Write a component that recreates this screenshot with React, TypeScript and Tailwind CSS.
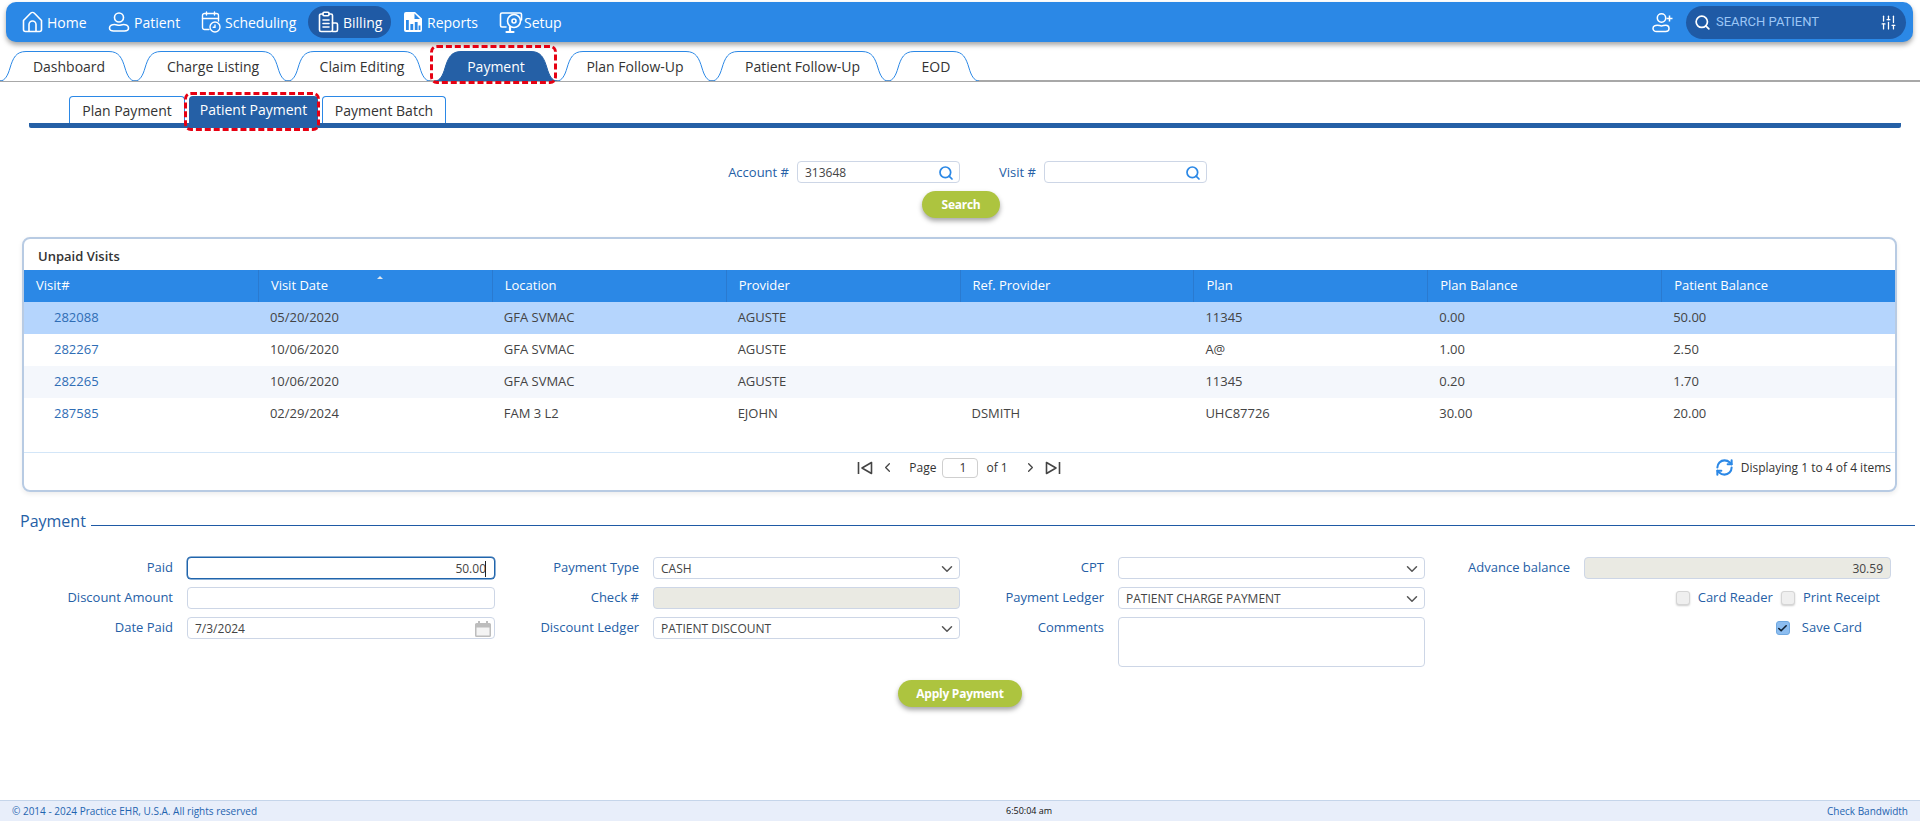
import type { ReactNode } from "react"
import { ChevronDown, ChevronLeft, ChevronRight, RefreshCw, Search, SlidersVertical, Check } from "lucide-react"

const font = "font-['Open_Sans',sans-serif]"

function HomeIcon() {
  return (
    <svg width="21" height="22" viewBox="0 0 21 22" fill="none" stroke="currentColor" strokeWidth="1.6" strokeLinejoin="round">
      <path d="M1.5 9.5 8.6 2.2c1-1 2.8-1 3.8 0l7.1 7.3v9a2 2 0 0 1-2 2h-14a2 2 0 0 1-2-2z" />
      <path d="M7 20.500v-7a3.500 3.500 0 0 1 7 0v7" />
    </svg>
  )
}

function PatientIcon() {
  return (
    <svg width="22" height="20" viewBox="0 0 22 20" fill="none" stroke="currentColor" strokeWidth="1.6">
      <circle cx="11" cy="5.500" r="4.500" />
      <path d="M1.500 16c0-2.500 3-3.500 5-3.500 2 0 3 .8 4.500.8s2.500-.8 4.500-.8c2 0 5 1 5 3.500 0 2.200-2 3-4 3h-11c-2 0-4-.8-4-3z" />
    </svg>
  )
}

function AddPatientIcon() {
  return (
    <svg width="21" height="21" viewBox="0 0 21 21" fill="none" stroke="currentColor" strokeWidth="1.5">
      <circle cx="9.500" cy="6" r="4.200" />
      <path d="M1 16.500c0-2.300 2.500-3.300 4.200-3.300 1.800 0 2.800.7 4.300.7s2.500-.7 4.300-.7c1.700 0 3.200 1 3.200 3.300 0 2-1.700 3-3.400 3H4.400C2.700 19.500 1 18.500 1 16.500z" />
      <path d="M17.500 3.500v6M14.500 6.500h6" />
    </svg>
  )
}

function ScheduleIcon() {
  return (
    <svg width="20" height="22" viewBox="0 0 20 22" fill="none" stroke="currentColor" strokeWidth="1.4" strokeLinecap="round">
      <path d="M8 18.500H3.500a2 2 0 0 1-2-2v-12a2 2 0 0 1 2-2h12a2 2 0 0 1 2 2V10" />
      <path d="M1.500 7.500h16M5.500 1v3M13.500 1v3" />
      <circle cx="14" cy="16" r="5" />
      <path d="M14 14v2.200h-1.800" />
    </svg>
  )
}

function BillingIcon() {
  return (
    <svg width="21" height="22" viewBox="0 0 21 22" fill="none" stroke="currentColor" strokeWidth="1.6" strokeLinecap="round">
      <path d="M5 3H3a1.500 1.500 0 0 0-1.500 1.500V19A1.500 1.500 0 0 0 3 20.500h10a1.500 1.500 0 0 0 1.500-1.500V4.500A1.500 1.500 0 0 0 13 3h-2" />
      <rect x="5" y="1.200" width="6" height="3.500" rx="1" />
      <path d="M5 9h6M5 12.500h6M5 16h6M14.500 12H18a1.500 1.500 0 0 1 1.500 1.500V19a1.500 1.500 0 0 1-1.500 1.500h-3.500" />
    </svg>
  )
}

function ReportsIcon() {
  return (
    <svg width="20" height="22" viewBox="0 0 20 22">
      <path fill="currentColor" d="M3 1h9l7 6.500V19a2 2 0 0 1-2 2H3a2 2 0 0 1-2-2V3a2 2 0 0 1 2-2z" />
      <path fill="#2b88e6" d="M3 9h2.800v10H3zM7.400 13h2.800v6H7.400zM11.800 11h2.800v8h-2.800zM15.600 14.500h1.800V19h-1.800z" />
      <path fill="#2b88e6" d="M11.500 2.500V8H17z" />
    </svg>
  )
}

function SetupIcon() {
  return (
    <svg width="25" height="23" viewBox="0 0 25 23" fill="none" stroke="currentColor" strokeWidth="1.6" strokeLinecap="round">
      <path d="M7 16H3a1.500 1.500 0 0 1-1.500-1.500v-11A1.500 1.500 0 0 1 3 2h18a1.500 1.500 0 0 1 1.500 1.500V9" />
      <circle cx="15" cy="10" r="6.500" />
      <circle cx="15" cy="10" r="2" />
      <path d="M11 16v4M7.500 21h7" strokeWidth="2.200" />
    </svg>
  )
}

function CalendarIcon() {
  return (
    <svg width="16" height="16" viewBox="0 0 16 16">
      <path fill="#bdbdbd" d="M3 0h2v2h6V0h2v2h1.500A1.500 1.500 0 0 1 16 3.500v11a1.500 1.500 0 0 1-1.500 1.500h-13A1.500 1.500 0 0 1 0 14.500v-11A1.500 1.500 0 0 1 1.500 2H3z" />
      <rect x="1.500" y="6.500" width="13" height="8" fill="#f4f4f4" />
    </svg>
  )
}

const navItems = [
  { label: "Home", icon: <HomeIcon />, cls: "w-[86px] gap-[4px]" },
  { label: "Patient", icon: <PatientIcon />, cls: "w-[93px] gap-[4px]" },
  { label: "Scheduling", icon: <ScheduleIcon />, cls: "w-[107px] gap-[4px]" },
  { label: "Billing", icon: <BillingIcon />, cls: "w-[83px] gap-[4px] mr-[12px] rounded-full bg-[#1f5aa5] pl-[10px]" },
  { label: "Reports", icon: <ReportsIcon />, cls: "w-[96px] gap-[4px]" },
  { label: "Setup", icon: <SetupIcon />, cls: "w-[80px] gap-0" },
]

function TabShape({ width, active }: { width: number; active?: boolean }) {
  const w = width
  const d = `M0 30C5 30 8 24 10 17C13 7 16 .5 26 .5H${w - 26}C${w - 16} .5 ${w - 13} 7 ${w - 10} 17C${w - 8} 24 ${w - 5} 30 ${w} 30`
  return (
    <svg className="absolute inset-0" width={w} height="30" viewBox={`0 0 ${w} 30`}>
      <path d={d} fill={active ? "#2560a6" : "#fff"} stroke={active ? "#2560a6" : "#2b88e6"} />
    </svg>
  )
}

const mainTabs = [
  { label: "Dashboard", width: 135, pad: "pl-[3px]" },
  { label: "Charge Listing", width: 153, pad: "pl-[3px]" },
  { label: "Claim Editing", width: 142, pad: "pl-[6px]" },
  { label: "Payment", width: 122, pad: "text-white", active: true },
  { label: "Plan Follow-Up", width: 155, pad: "pl-[1px]" },
  { label: "Patient Follow-Up", width: 176, pad: "pl-[5px]" },
  { label: "EOD", width: 91, pad: "pl-[5px]" },
]

const subTabClass = "h-[27px] rounded-t-[4px] flex items-center justify-center text-[14px]"

const rows = [
  ["282088", "05/20/2020", "GFA SVMAC", "AGUSTE", "", "11345", "0.00", "50.00"],
  ["282267", "10/06/2020", "GFA SVMAC", "AGUSTE", "", "A@", "1.00", "2.50"],
  ["282265", "10/06/2020", "GFA SVMAC", "AGUSTE", "", "11345", "0.20", "1.70"],
  ["287585", "02/29/2024", "FAM 3 L2", "EJOHN", "DSMITH", "UHC87726", "30.00", "20.00"],
]

const headers = ["Visit#", "Visit Date", "Location", "Provider", "Ref. Provider", "Plan", "Plan Balance", "Patient Balance"]

const fieldClass = "h-[22px] w-full rounded-[4px] border flex items-center px-[7px] pt-px text-[12px] text-[#444]"
const inputClass = `${fieldClass} border-[#cdd6e6] bg-white`
const disabledClass = `${fieldClass} border-[#cdd6e6] bg-[#eaeae3]`
const checkClass = "h-[14px] w-[14px] rounded-[3px] border border-[#d5d5d5] bg-[#efefef] shadow-[0_1px_2px_rgba(0,0,0,0.2)]"

function Label({ children }: { children: ReactNode }) {
  return <div className="h-[22px] pr-[14px] text-right text-[13px] leading-[20px] text-[#2560a6]">{children}</div>
}

function SelectBox({ value }: { value?: string }) {
  return (
    <div className={`${inputClass} justify-between`}>
      <span>{value}</span>
      <ChevronDown className="h-[18px] w-[18px] -mr-[4px] text-[#555]" strokeWidth={2} />
    </div>
  )
}

function GreenButton({ children, className }: { children: ReactNode; className: string }) {
  return (
    <button className={`${className} rounded-full bg-[#adc43f] text-white font-bold text-[12px] tracking-[-0.25px] shadow-[0_3px_5px_rgba(0,0,0,0.35)]`}>
      {children}
    </button>
  )
}

export default function App() {
  return (
    <div className={`${font} relative h-[821px] w-[1920px] overflow-hidden bg-white flex flex-col`}>
      {/* top nav */}
      <div className="mt-[2px] ml-[6px] h-[40px] w-[1907px] shrink-0 rounded-[10px] bg-[#2b88e6] shadow-[0_3px_5px_rgba(0,0,0,0.35)] flex items-center pl-[16px] pr-[7px] text-white">
        {navItems.map((item) => (
          <div key={item.label} className={`${item.cls} h-[32px] flex items-center text-[14px]`}>
            {item.icon}
            <span>{item.label}</span>
          </div>
        ))}
        <div className="ml-auto">
          <AddPatientIcon />
        </div>
        <div className="ml-[13px] h-[33px] w-[220px] rounded-full bg-[#1f5aa5] flex items-center pl-[8px] pr-[9px]">
          <Search className="h-[17px] w-[17px]" strokeWidth={2.4} />
          <span className="ml-[5px] text-[13px] text-[#9cc6f5] font-['Roboto',sans-serif]">SEARCH PATIENT</span>
          <SlidersVertical className="ml-auto h-[17px] w-[17px]" strokeWidth={1.8} />
        </div>
      </div>

      {/* main tabs */}
      <div className="mt-[9px] h-[31px] shrink-0 border-b-2 border-[#a8a8a8] flex text-[14px] text-[#333]">
        {mainTabs.map((tab) => (
          <div
            key={tab.label}
            style={{ width: tab.width }}
            className={`relative h-[30px] ${tab.active ? "ml-[5px]" : ""}`}
          >
            <TabShape width={tab.width} active={tab.active} />
            <div className={`relative h-full flex items-center justify-center ${tab.pad}`}>{tab.label}</div>
            {tab.active && <div className="absolute -top-[6px] -left-[5px] right-0 -bottom-[3px] rounded-[7px] border-[3px] border-dashed border-[#e60012]" />}
          </div>
        ))}
      </div>

      {/* sub tabs */}
      <div className="mt-[14px] mx-[29px] w-[1872px] border-b-[5px] border-[#2560a6] rounded-b-[2px] flex items-end pl-[40px] text-[#333]">
        <div className={`${subTabClass} w-[116px] border border-b-0 border-[#2b88e6]`}>Plan Payment</div>
        <div className={`${subTabClass} relative ml-[4px] w-[129px] bg-[#2560a6] text-white`}>
          Patient Payment
          <div className="absolute -top-[4px] -left-[5px] -right-[2px] -bottom-[8px] rounded-[7px] border-[3px] border-dashed border-[#e60012]" />
        </div>
        <div className={`${subTabClass} ml-[4px] w-[124px] border border-b-0 border-[#2b88e6]`}>Payment Batch</div>
      </div>

      {/* search */}
      <div className="mt-[33px] h-[22px] flex items-center text-[13px] text-[#2560a6] whitespace-nowrap">
        <span className="ml-[728px] w-[69px] pr-[8px] text-right leading-[20px]">Account #</span>
        <div className={`${inputClass} !w-[163px] justify-between`}>
          <span>313648</span>
          <Search className="h-[16px] w-[16px] -mr-[2px] text-[#2b88e6]" strokeWidth={2.6} />
        </div>
        <span className="ml-[32px] w-[52px] pr-[8px] text-right leading-[20px]">Visit #</span>
        <div className={`${inputClass} !w-[163px] justify-end`}>
          <Search className="h-[16px] w-[16px] -mr-[2px] text-[#2b88e6]" strokeWidth={2.6} />
        </div>
      </div>
      <GreenButton className="mt-[8px] ml-[922px] h-[27px] w-[78px]">Search</GreenButton>

      {/* unpaid visits grid */}
      <div className="mt-[19px] ml-[22px] h-[255px] w-[1875px] rounded-[8px] border-2 border-[#b8cbe3] shadow-[0_2px_5px_rgba(0,0,0,0.08)] flex flex-col">
        <div className="h-[31px] pl-[14px] pt-[5px] flex items-center text-[13px] font-semibold text-[#333]">Unpaid Visits</div>
        <div className="h-[32px] grid grid-cols-8 bg-[#2b88e6] text-[13px] text-white">
          {headers.map((h, i) => (
            <div key={h} className={`relative flex items-center pl-[12px] ${i > 0 ? "border-l border-[#2a7ad0]" : ""}`}>
              {h}
              {i === 1 && <span className="absolute left-[118px] top-[6px] h-0 w-0 border-x-[3px] border-b-[3px] border-x-transparent border-b-[#dfe6ee]" />}
            </div>
          ))}
        </div>
        {rows.map((row, r) => (
          <div key={row[0]} className={`h-[32px] grid grid-cols-8 text-[13px] text-[#444] ${r === 0 ? "bg-[#b5d5fd]" : r === 2 ? "bg-[#f4f7fc]" : "bg-white"}`}>
            {row.map((cell, c) => (
              <div key={c} className={`flex items-center ${c === 0 ? "pl-[30px] text-[#2f6db5]" : "pl-[12px]"}`}>{cell}</div>
            ))}
          </div>
        ))}
        <div className="mt-[22px] flex-1 border-t border-[#d3e6f8] pb-[8px] relative flex items-center justify-center text-[12px] text-[#333]">
          <div className="flex items-center ml-[-1px]">
            <svg width="16" height="14" viewBox="0 0 16 14" fill="none" stroke="#444" strokeWidth="1.6" strokeLinejoin="round">
              <path d="M1.500 1v12M14.500 1.500v11L5 7z" />
            </svg>
            <ChevronLeft className="ml-[7px] h-[15px] w-[15px] text-[#444]" strokeWidth={2} />
            <span className="ml-[14px]">Page</span>
            <span className="ml-[6px] h-[20px] w-[36px] rounded-[4px] border border-[#cfcfcf] flex items-center justify-end pr-[11px]">1</span>
            <span className="ml-[8px]">of 1</span>
            <ChevronRight className="ml-[15px] h-[15px] w-[15px] text-[#444]" strokeWidth={2} />
            <svg className="ml-[7px]" width="16" height="14" viewBox="0 0 16 14" fill="none" stroke="#444" strokeWidth="1.6" strokeLinejoin="round">
              <path d="M14.500 1v12M1.500 1.500v11L11 7z" />
            </svg>
          </div>
          <div className="absolute right-[4px] top-0 h-full pb-[8px] flex items-center gap-[7px]">
            <RefreshCw className="h-[19px] w-[19px] text-[#2b88e6]" strokeWidth={2.6} />
            <span>Displaying 1 to 4 of 4 items</span>
          </div>
        </div>
      </div>

      {/* payment form */}
      <div className="mt-[18px] ml-[20px] mr-[5px] flex items-end gap-[5px]">
        <span className="text-[16px] leading-[22px] text-[#2560a6]">Payment</span>
        <div className="mb-[6px] h-px flex-1 bg-[#1f5aa5]" />
      </div>
      <div className="mt-[25px] grid grid-cols-[187px_308px_158px_307px_158px_307px_159px_307px] gap-y-[8px] items-start">
        <Label>Paid</Label>
        <div className={`${fieldClass} justify-end border-[#1f64ac] bg-white !pr-[8px] shadow-[0_0_0_0.5px_#1f64ac]`}>
          <span>50.00</span>
          <span className="ml-[-1px] h-[16px] w-px bg-[#222]" />
        </div>
        <Label>Payment Type</Label>
        <SelectBox value="CASH" />
        <Label>CPT</Label>
        <SelectBox />
        <Label>Advance balance</Label>
        <div className={`${disabledClass} justify-end`}>30.59</div>

        <Label>Discount Amount</Label>
        <div className={inputClass} />
        <Label>Check #</Label>
        <div className={disabledClass} />
        <Label>Payment Ledger</Label>
        <SelectBox value="PATIENT CHARGE PAYMENT" />
        <div className="col-span-2 h-[22px] pr-[11px] flex items-center justify-end text-[13px] text-[#2560a6]">
          <span className={checkClass} />
          <span className="ml-[8px]">Card Reader</span>
          <span className={`${checkClass} ml-[8px]`} />
          <span className="ml-[8px]">Print Receipt</span>
        </div>

        <Label>Date Paid</Label>
        <div className={`${inputClass} justify-between`}>
          <span>7/3/2024</span>
          <div className="-mr-[4px]">
            <CalendarIcon />
          </div>
        </div>
        <Label>Discount Ledger</Label>
        <SelectBox value="PATIENT DISCOUNT" />
        <Label>Comments</Label>
        <div className={`${inputClass} !h-[50px]`} />
        <div className="col-span-2 h-[22px] pr-[29px] flex items-center justify-end text-[13px] text-[#2560a6]">
          <span className="h-[14px] w-[14px] rounded-[3px] bg-[#8cbdf0] border border-[#6fa8e0] flex items-center justify-center">
            <Check className="h-[11px] w-[11px] text-[#123]" strokeWidth={3.5} />
          </span>
          <span className="ml-[12px]">Save Card</span>
        </div>
      </div>
      <GreenButton className="mt-[13px] ml-[898px] h-[27px] w-[124px]">Apply Payment</GreenButton>

      {/* footer */}
      <div className="mt-auto h-[21px] shrink-0 border-t border-[#c5d5ea] bg-[#e8eefa] relative flex items-center justify-between px-[12px] text-[10px] text-[#1f64b0]">
        <span>© 2014 - 2024 Practice EHR, U.S.A. All rights reserved</span>
        <span className="absolute left-[1006px] text-[9px] text-[#111]">6:50:04 am</span>
        <span>Check Bandwidth</span>
      </div>
    </div>
  )
}
